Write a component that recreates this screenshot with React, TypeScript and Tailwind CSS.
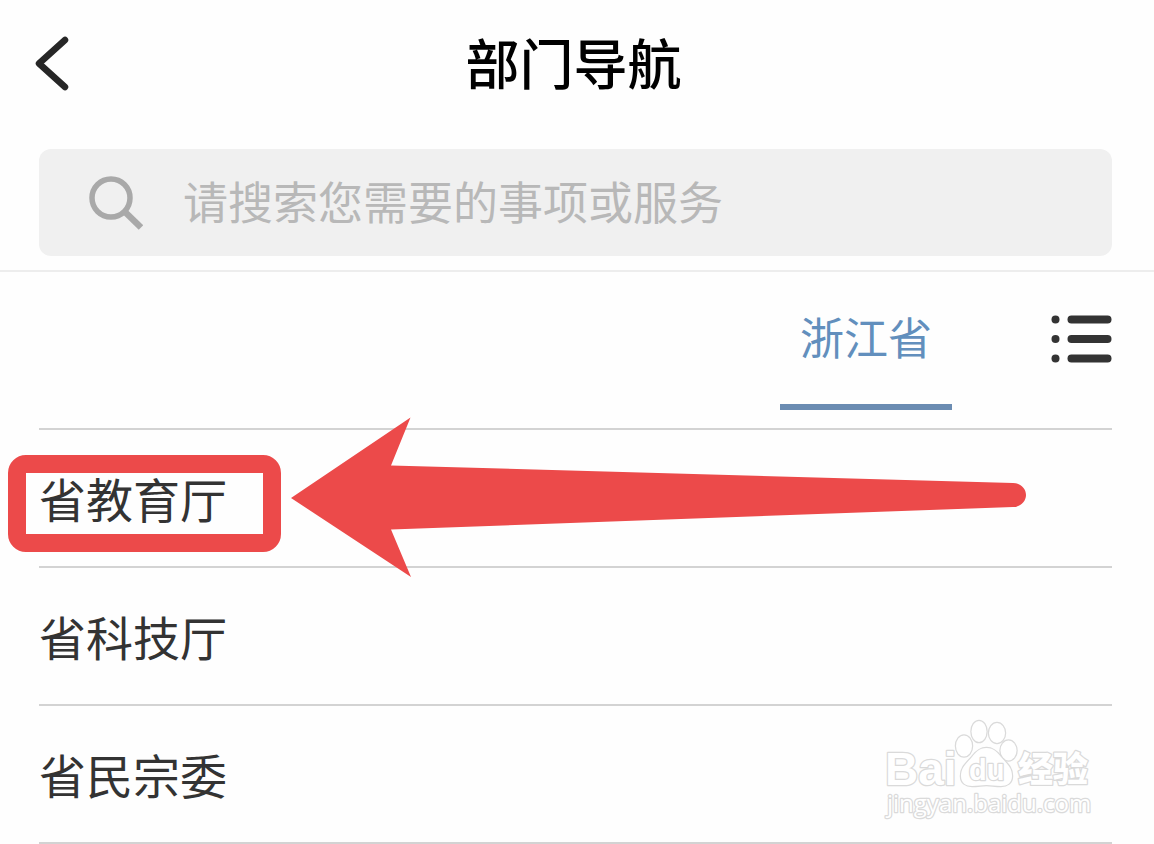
const departments = [
  { id: 'edu', name: '省教育厅', highlighted: true },
  { id: 'sci', name: '省科技厅' },
  { id: 'ethnic', name: '省民宗委', watermark: true },
]

function BackIcon() {
  return (
    <svg width="34" height="56" viewBox="0 0 34 56" fill="none" aria-hidden="true">
      <path d="M30 4 L4 27.500 L30 51" stroke="#262626" strokeWidth="6.500" strokeLinecap="round" strokeLinejoin="round" />
    </svg>
  )
}

function SearchIcon() {
  return (
    <svg width="56" height="56" viewBox="0 0 56 56" fill="none" aria-hidden="true">
      <circle cx="24" cy="23" r="19" stroke="#a9a9a9" strokeWidth="5.500" />
      <path d="M37 36 L54 52.500" stroke="#a9a9a9" strokeWidth="6.500" />
    </svg>
  )
}

function ListIcon() {
  return (
    <svg width="61" height="48" viewBox="0 0 61 48" fill="#333333" aria-hidden="true">
      {[4.5, 24, 43.5].map((y) => (
        <g key={y}>
          <circle cx="4.5" cy={y} r="4" />
          <rect x="16.5" y={y - 4} width="44" height="8" rx="4" />
        </g>
      ))}
    </svg>
  )
}

function Arrow() {
  return (
    <svg
      className="absolute -top-[13px] left-[252px] z-10"
      width="736"
      height="160"
      viewBox="0 0 736 160"
      fill="#ec4a4a"
      aria-hidden="true"
    >
      <path d="M0 81 L119.500 0.500 L100 48.500 L722 66 C730 66 735 72 735 78 C735 84 730 90 722 90 L100 112.500 L120 160 Z" />
    </svg>
  )
}

function Watermark() {
  return (
    <svg
      className="absolute right-[18px] top-[10px]"
      width="212"
      height="108"
      viewBox="0 0 212 108"
      fill="#ffffff"
      stroke="#dadada"
      strokeWidth="2.500"
      strokeLinejoin="round"
      style={{ paintOrder: 'stroke' }}
    >
      <text x="3" y="69" fontSize="46" fontWeight="700" fontFamily="'Liberation Sans', sans-serif">Bai</text>
      <ellipse cx="82" cy="30" rx="8" ry="10.500" />
      <ellipse cx="97" cy="15.500" rx="7.500" ry="10.500" />
      <ellipse cx="115" cy="17" rx="8" ry="10" />
      <ellipse cx="126.500" cy="34.500" rx="8" ry="10" />
      <path d="M104.500 32 C112 32 116 37 119 41 C124 47 130 51 130 60 C130 67 125 70 119 70 C113 70 109 69 104.500 69 C100 69 96 70 90 70 C84 70 79 67 79 60 C79 51 85 47 90 41 C93 37 97 32 104.500 32 Z" />
      <text x="87" y="64" fontSize="29" fontWeight="700" fontFamily="'Liberation Sans', sans-serif">du</text>
      <text x="136" y="66" fontSize="35" fontWeight="900" fontFamily="'Noto Sans CJK SC', sans-serif">经验</text>
      <text x="5" y="96" fontSize="24" fontFamily="'Open Sans', sans-serif">jingyan.baidu.com</text>
    </svg>
  )
}

export default function App() {
  return (
    <div className="overflow-x-hidden bg-[#fefefe] font-['Noto_Sans_CJK_SC',sans-serif] text-[#333333]">
      <header className="border-b-2 border-[#ededed] pb-[14px]">
        <div className="grid h-32 grid-cols-[1fr_auto_1fr] items-center pl-[35px] pr-[42px]">
          <button type="button" aria-label="返回" className="justify-self-start">
            <BackIcon />
          </button>
          <h1 className="pb-1 text-[54px] font-medium leading-[72px] text-black">部门导航</h1>
        </div>
        <div className="pl-[39px] pr-[42px] pt-[21px]">
          <label className="flex h-[107px] items-center gap-10 rounded-xl bg-[#f0f0f0] pl-[48px] pr-6">
            <SearchIcon />
            <input
              type="search"
              aria-label="搜索"
              placeholder="请搜索您需要的事项或服务"
              className="min-w-0 flex-1 bg-transparent pb-1 text-[45px] leading-[64px] outline-none placeholder:text-[#b8b8b8]"
            />
          </label>
        </div>
      </header>

      <nav className="flex h-[138px] items-stretch justify-end gap-[99px] pr-[42px]">
        <button type="button" className="border-b-6 border-[#6b8cb2] px-5 pb-1 text-[44px] leading-[64px] text-[#628fbd]">
          浙江省
        </button>
        <button type="button" aria-label="列表" className="pb-1">
          <ListIcon />
        </button>
      </nav>

      <main className="pl-[39px] pr-[42px] pt-[18px]">
        <ul className="border-t-2 border-[#d3d3d3]">
          {departments.map((d) => (
            <li key={d.id} className="relative border-b-2 border-[#d3d3d3]">
              <a href={`#${d.id}`} className="flex h-[136px] items-center text-[47px] leading-[68px]">
                {d.name}
              </a>
              {d.highlighted && (
                <>
                  <span className="absolute -left-[31px] top-[25px] h-[97px] w-[273px] rounded-[18px] border-18 border-[#ec4a4a]" />
                  <Arrow />
                </>
              )}
              {d.watermark && <Watermark />}
            </li>
          ))}
        </ul>
      </main>
    </div>
  )
}
